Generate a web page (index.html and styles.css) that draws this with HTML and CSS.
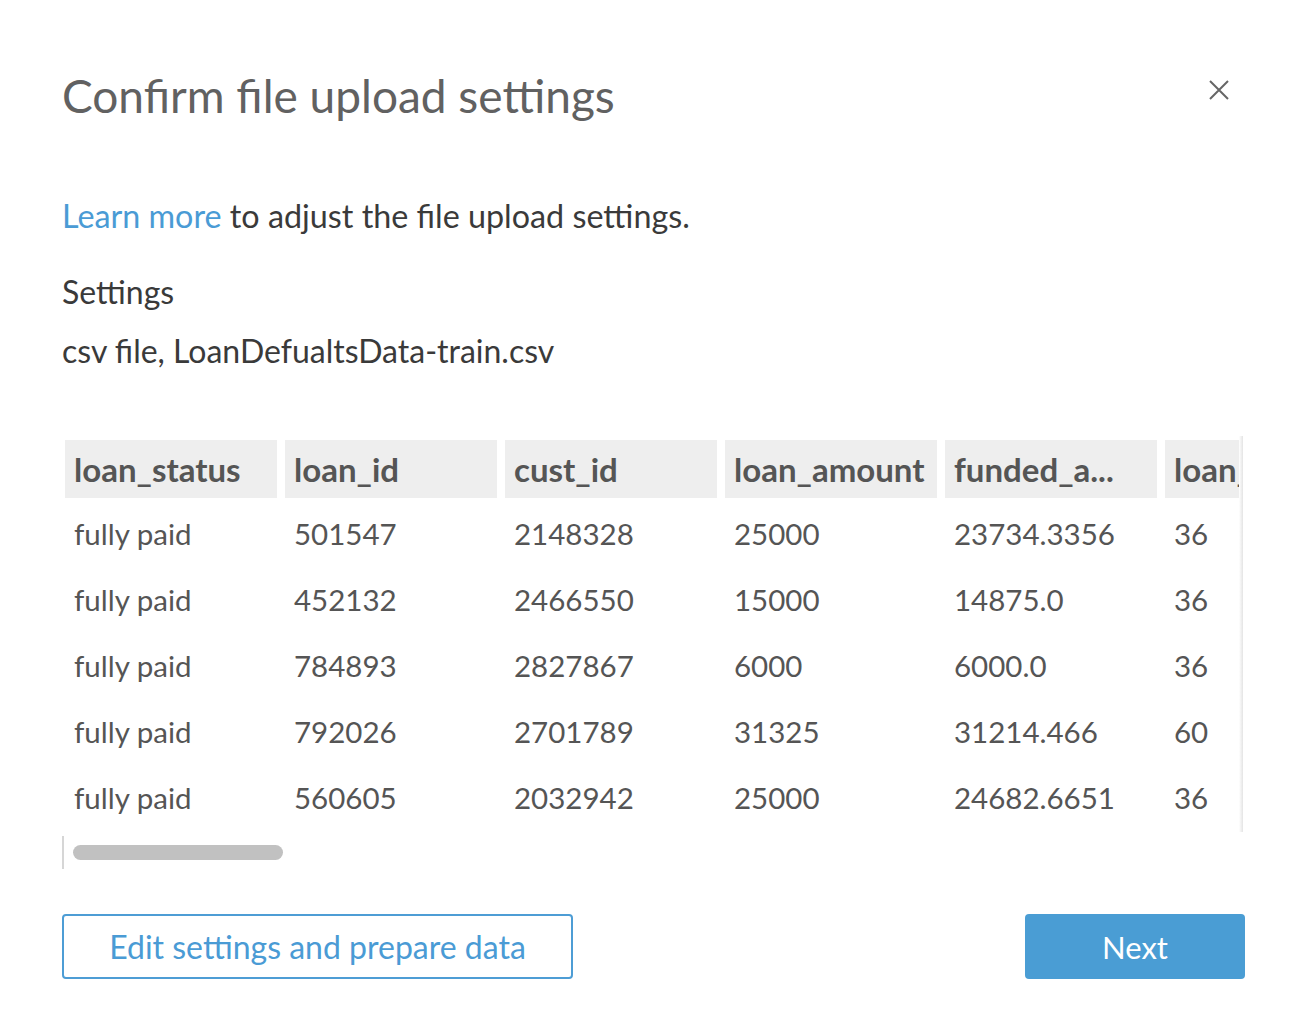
FILE: index.html
```html
<!DOCTYPE html>
<html>
<head>
<meta charset="utf-8">
<link rel="stylesheet" href="styles.css">
</head>
<body>
<div class="modal">
  <div class="header">
    <h1 class="title">Confirm file upload settings</h1>
    <button class="close" aria-label="Close">
      <svg width="22" height="22" viewBox="0 0 22 22"><path d="M2 2 L20 20 M20 2 L2 20" stroke="#666" stroke-width="2" fill="none"/></svg>
    </button>
  </div>
  <p class="intro"><a class="link" href="#">Learn more</a> to adjust the file upload settings.</p>
  <p class="label">Settings</p>
  <p class="file">csv file, LoanDefualtsData-train.csv</p>
  <div class="table-wrap">
    <div class="grid">
      <div class="th">loan_status</div><div class="th">loan_id</div><div class="th">cust_id</div><div class="th">loan_amount</div><div class="th">funded_a...</div><div class="th">loan_term</div>
      <div class="td">fully paid</div><div class="td">501547</div><div class="td">2148328</div><div class="td">25000</div><div class="td">23734.3356</div><div class="td">36</div>
      <div class="td">fully paid</div><div class="td">452132</div><div class="td">2466550</div><div class="td">15000</div><div class="td">14875.0</div><div class="td">36</div>
      <div class="td">fully paid</div><div class="td">784893</div><div class="td">2827867</div><div class="td">6000</div><div class="td">6000.0</div><div class="td">36</div>
      <div class="td">fully paid</div><div class="td">792026</div><div class="td">2701789</div><div class="td">31325</div><div class="td">31214.466</div><div class="td">60</div>
      <div class="td">fully paid</div><div class="td">560605</div><div class="td">2032942</div><div class="td">25000</div><div class="td">24682.6651</div><div class="td">36</div>
    </div>
  </div>
  <div class="scrollbar"><div class="thumb"></div></div>
  <div class="actions">
    <button class="btn btn-outline">Edit settings and prepare data</button>
    <button class="btn btn-primary">Next</button>
  </div>
</div>
</body>
</html>
```

FILE: styles.css
```css
* { box-sizing: border-box; }
html, body { margin: 0; padding: 0; background: #fff; }
body { font-family: Lato, "Noto Sans", sans-serif; color: #444; }
.modal { width: 1300px; height: 1026px; padding: 0 55px 0 62px; }
.header { display: flex; justify-content: space-between; align-items: flex-start; height: 191px; }
.title { margin: 0; padding-top: 68px; font-size: 46px; font-weight: 400; color: #616161; line-height: 56px; }
.close { margin-top: 79px; margin-right: 15px; background: none; border: 0; padding: 0; width: 22px; height: 22px; }
.intro { margin: 0; font-size: 32.3px; line-height: 50px; color: #3a3a3a; height: 80px; }
.link { color: #4a9bd5; text-decoration: none; }
.label, .file { margin: 0; font-size: 32px; line-height: 42px; color: #3a3a3a; }
.label { height: 59px; }
.file { height: 106px; }
.table-wrap { position: relative; width: 1181px; height: 396px; overflow: hidden; padding-left: 3px; }
.table-wrap::after { content: ""; position: absolute; right: 0; top: 0; bottom: 0; width: 4px; background: linear-gradient(to right, #fff, #e4e4e4); }
.grid { display: grid; grid-template-columns: repeat(6, 212px); column-gap: 8px; grid-template-rows: 58px repeat(5, 66px); padding-top: 4px; }
.th { background: #eeeeee; font-weight: 700; font-size: 33px; color: #555; padding-left: 9px; display: flex; align-items: center; white-space: nowrap; overflow: hidden; height: 58px; }
.td { font-size: 29.5px; color: #555; padding-left: 9px; display: flex; align-items: center; padding-top: 4px; white-space: nowrap; }
.scrollbar { border-left: 2px solid #d6d6d6; height: 33px; margin-top: 4px; padding: 9px 0 0 9px; }
.thumb { width: 210px; height: 15px; border-radius: 8px; background: #c1c1c1; }
.actions { display: flex; justify-content: space-between; margin-top: 45px; }
.btn { font-family: inherit; font-size: 31px; height: 65px; border-radius: 4px; cursor: pointer; }
.btn-outline { width: 511px; background: #fff; border: 2px solid #4d9dd5; color: #4a9bd5; font-size: 32px; }
.btn-primary { width: 220px; background: #4a9dd4; border: 0; color: #fff; }
```
